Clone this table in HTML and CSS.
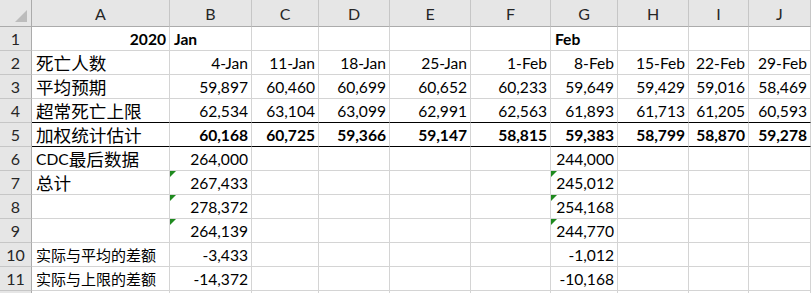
FILE: index.html
```html
<!DOCTYPE html>
<html lang="zh">
<head>
<meta charset="utf-8">
<title>Sheet</title>
<link rel="stylesheet" href="styles.css">
</head>
<body>
<div class="sheet">
  <div class="cell corner"><span class="selall"></span></div>
  <div class="cell hd">A</div><div class="cell hd">B</div><div class="cell hd">C</div><div class="cell hd">D</div><div class="cell hd">E</div><div class="cell hd">F</div><div class="cell hd">G</div><div class="cell hd">H</div><div class="cell hd">I</div><div class="cell hd">J</div><div class="cell hd"></div>

  <div class="cell rh">1</div>
  <div class="cell r b">2020</div><div class="cell b">Jan</div><div class="cell"></div><div class="cell"></div><div class="cell"></div><div class="cell"></div><div class="cell b">Feb</div><div class="cell"></div><div class="cell"></div><div class="cell"></div><div class="cell"></div>

  <div class="cell rh">2</div>
  <div class="cell"><span class="zh">死亡人数</span></div><div class="cell r">4-Jan</div><div class="cell r">11-Jan</div><div class="cell r">18-Jan</div><div class="cell r">25-Jan</div><div class="cell r">1-Feb</div><div class="cell r">8-Feb</div><div class="cell r">15-Feb</div><div class="cell r">22-Feb</div><div class="cell r">29-Feb</div><div class="cell"></div>

  <div class="cell rh">3</div>
  <div class="cell"><span class="zh">平均预期</span></div><div class="cell r">59,897</div><div class="cell r">60,460</div><div class="cell r">60,699</div><div class="cell r">60,652</div><div class="cell r">60,233</div><div class="cell r">59,649</div><div class="cell r">59,429</div><div class="cell r">59,016</div><div class="cell r">58,469</div><div class="cell"></div>

  <div class="cell rh">4</div>
  <div class="cell k"><span class="zh">超常死亡上限</span></div><div class="cell r k">62,534</div><div class="cell r k">63,104</div><div class="cell r k">63,099</div><div class="cell r k">62,991</div><div class="cell r k">62,563</div><div class="cell r k">61,893</div><div class="cell r k">61,713</div><div class="cell r k">61,205</div><div class="cell r k">60,593</div><div class="cell k"></div>

  <div class="cell rh">5</div>
  <div class="cell k"><span class="zh">加权统计估计</span></div><div class="cell r b k">60,168</div><div class="cell r b k">60,725</div><div class="cell r b k">59,366</div><div class="cell r b k">59,147</div><div class="cell r b k">58,815</div><div class="cell r b k">59,383</div><div class="cell r b k">58,799</div><div class="cell r b k">58,870</div><div class="cell r b k">59,278</div><div class="cell k"></div>

  <div class="cell rh">6</div>
  <div class="cell">CDC<span class="zh">最后数据</span></div><div class="cell r">264,000</div><div class="cell"></div><div class="cell"></div><div class="cell"></div><div class="cell"></div><div class="cell r">244,000</div><div class="cell"></div><div class="cell"></div><div class="cell"></div><div class="cell"></div>

  <div class="cell rh">7</div>
  <div class="cell"><span class="zh">总计</span></div><div class="cell r t">267,433</div><div class="cell"></div><div class="cell"></div><div class="cell"></div><div class="cell"></div><div class="cell r t">245,012</div><div class="cell"></div><div class="cell"></div><div class="cell"></div><div class="cell t"></div>

  <div class="cell rh">8</div>
  <div class="cell"></div><div class="cell r t">278,372</div><div class="cell"></div><div class="cell"></div><div class="cell"></div><div class="cell"></div><div class="cell r t">254,168</div><div class="cell"></div><div class="cell"></div><div class="cell"></div><div class="cell t"></div>

  <div class="cell rh">9</div>
  <div class="cell"></div><div class="cell r t">264,139</div><div class="cell"></div><div class="cell"></div><div class="cell"></div><div class="cell"></div><div class="cell r t">244,770</div><div class="cell"></div><div class="cell"></div><div class="cell"></div><div class="cell t"></div>

  <div class="cell rh">10</div>
  <div class="cell"><span class="zs">实际与平均的差额</span></div><div class="cell r">-3,433</div><div class="cell"></div><div class="cell"></div><div class="cell"></div><div class="cell"></div><div class="cell r">-1,012</div><div class="cell"></div><div class="cell"></div><div class="cell"></div><div class="cell"></div>

  <div class="cell rh">11</div>
  <div class="cell"><span class="zs">实际与上限的差额</span></div><div class="cell r">-14,372</div><div class="cell"></div><div class="cell"></div><div class="cell"></div><div class="cell"></div><div class="cell r">-10,168</div><div class="cell"></div><div class="cell"></div><div class="cell"></div><div class="cell"></div>

  <div class="cell rh tail"></div>
  <div class="cell tail"></div><div class="cell tail"></div><div class="cell tail"></div><div class="cell tail"></div><div class="cell tail"></div><div class="cell tail"></div><div class="cell tail"></div><div class="cell tail"></div><div class="cell tail"></div><div class="cell tail"></div><div class="cell tail"></div>
</div>
</body>
</html>
```

FILE: styles.css
```css
html, body {
  margin: 0;
  padding: 0;
  background: #ffffff;
  overflow: hidden;
}

body {
  font-family: Lato, "Noto Sans CJK SC", sans-serif;
  font-size: 15.6px;
  color: #000000;
}

.sheet {
  display: grid;
  grid-template-columns: 32px 138px 82px 67px 71px 81px 80px 67px 71px 60px 62px 1px;
  grid-template-rows: 27px repeat(11, 24px) 2px;
  width: 811px;
  height: 293px;
  overflow: hidden;
}

.cell {
  box-sizing: border-box;
  position: relative;
  display: flex;
  align-items: flex-end;
  justify-content: flex-start;
  padding: 0 3px 2px 4px;
  border-right: 1px solid #d4d4d4;
  border-bottom: 1px solid #d4d4d4;
  line-height: 18px;
  white-space: nowrap;
}

.tail {
  padding: 0;
  border-bottom: none;
}

.r {
  justify-content: flex-end;
}

.b {
  font-weight: 700;
}

.k {
  border-bottom-color: #000000;
}

.zh {
  font-family: "Noto Sans CJK SC", sans-serif;
  font-size: 17.6px;
  line-height: 18px;
}

.zs {
  font-family: "Noto Sans CJK SC", sans-serif;
  font-size: 15px;
  line-height: 18px;
}

.hd,
.corner,
.rh {
  background: #e6e6e6;
  color: #262626;
  justify-content: center;
  align-items: center;
  padding: 0;
  font-size: 16px;
}

.hd {
  border-right-color: #c6c6c6;
  border-bottom-color: #ababab;
  padding-top: 1px;
}

.corner {
  border-right-color: #ababab;
  border-bottom-color: #ababab;
}

.selall {
  position: absolute;
  right: 4px;
  bottom: 4px;
  width: 12px;
  height: 12px;
  background: #bcbcbc;
  clip-path: polygon(100% 0, 100% 100%, 0 100%);
}

.rh {
  border-right-color: #ababab;
  border-bottom-color: #c6c6c6;
  padding-top: 1px;
}

.t::before {
  content: "";
  position: absolute;
  left: 0;
  top: 0;
  width: 6px;
  height: 6px;
  background: #1f8a1f;
  clip-path: polygon(0 0, 100% 0, 0 100%);
}
```
